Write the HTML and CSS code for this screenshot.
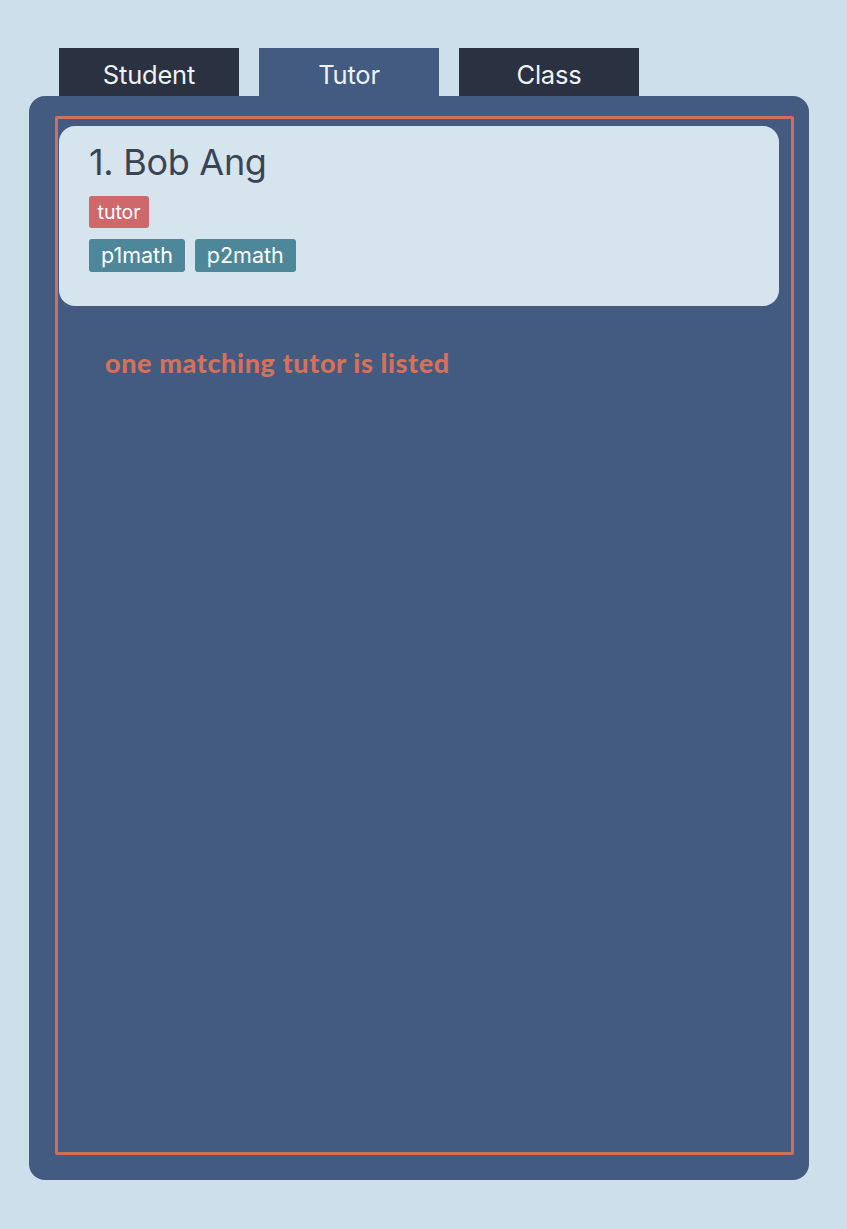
FILE: index.html
```html
<!DOCTYPE html>
<html>
<head>
<meta charset="utf-8">
<link rel="stylesheet" href="styles.css">
</head>
<body>
<div class="app">
  <div class="tabs">
    <div class="tab">Student</div>
    <div class="tab active">Tutor</div>
    <div class="tab">Class</div>
  </div>
  <div class="panel">
    <div class="frame">
      <div class="card">
        <div class="name">1. Bob Ang</div>
        <div class="tagrow"><span class="tag role">tutor</span></div>
        <div class="tagrow"><span class="tag subj">p1math</span><span class="tag subj">p2math</span></div>
      </div>
      <div class="note">one matching tutor is listed</div>
    </div>
  </div>
</div>
</body>
</html>
```
FILE: styles.css
```css
html, body {
  margin: 0;
  padding: 0;
  background: #cddfea;
  font-family: Inter, "Noto Sans", sans-serif;
}
.app {
  padding: 48px 38px 49px 29px;
}
.tabs {
  display: flex;
  gap: 20px;
  margin-left: 30px;
  height: 48px;
}
.tab {
  width: 180px;
  height: 48px;
  background: #2a3140;
  color: #eef2f7;
  font-size: 25.5px;
  letter-spacing: -0.2px;
  display: flex;
  align-items: center;
  justify-content: center;
  padding-top: 4px;
  box-sizing: border-box;
}
.tab.active {
  background: #435b80;
}
.panel {
  background: #435b80;
  border-radius: 16px;
  height: 1084px;
  box-sizing: border-box;
  padding: 20px 15px 25px 26px;
}
.frame {
  border: 3px solid #d0705a;
  border-radius: 2px;
  height: 100%;
  box-sizing: border-box;
  padding: 7px 0 0 1px;
}
.card {
  width: 720px;
  height: 180px;
  box-sizing: border-box;
  background: #d6e4ee;
  border-radius: 16px;
  padding: 12px 30px 0;
  display: flex;
  flex-direction: column;
  gap: 10px;
}
.name {
  font-size: 36px;
  letter-spacing: -0.3px;
  color: #3a4457;
  line-height: 48px;
}
.tagrow {
  display: flex;
  gap: 10px;
}
.tag {
  color: #ffffff;
  border-radius: 3px;
}
.tag.role {
  background: #cd686b;
  font-size: 19.5px;
  line-height: 32px;
  padding: 0 8.5px;
}
.tag.subj {
  background: #4e8799;
  font-size: 21.5px;
  line-height: 33px;
  padding: 0 12px;
  margin-top: 1px;
}
.note {
  margin: 40px 0 0 46px;
  font-family: Lato, sans-serif;
  font-weight: 900;
  font-size: 27px;
  letter-spacing: 0.6px;
  color: #d5705a;
}
```
